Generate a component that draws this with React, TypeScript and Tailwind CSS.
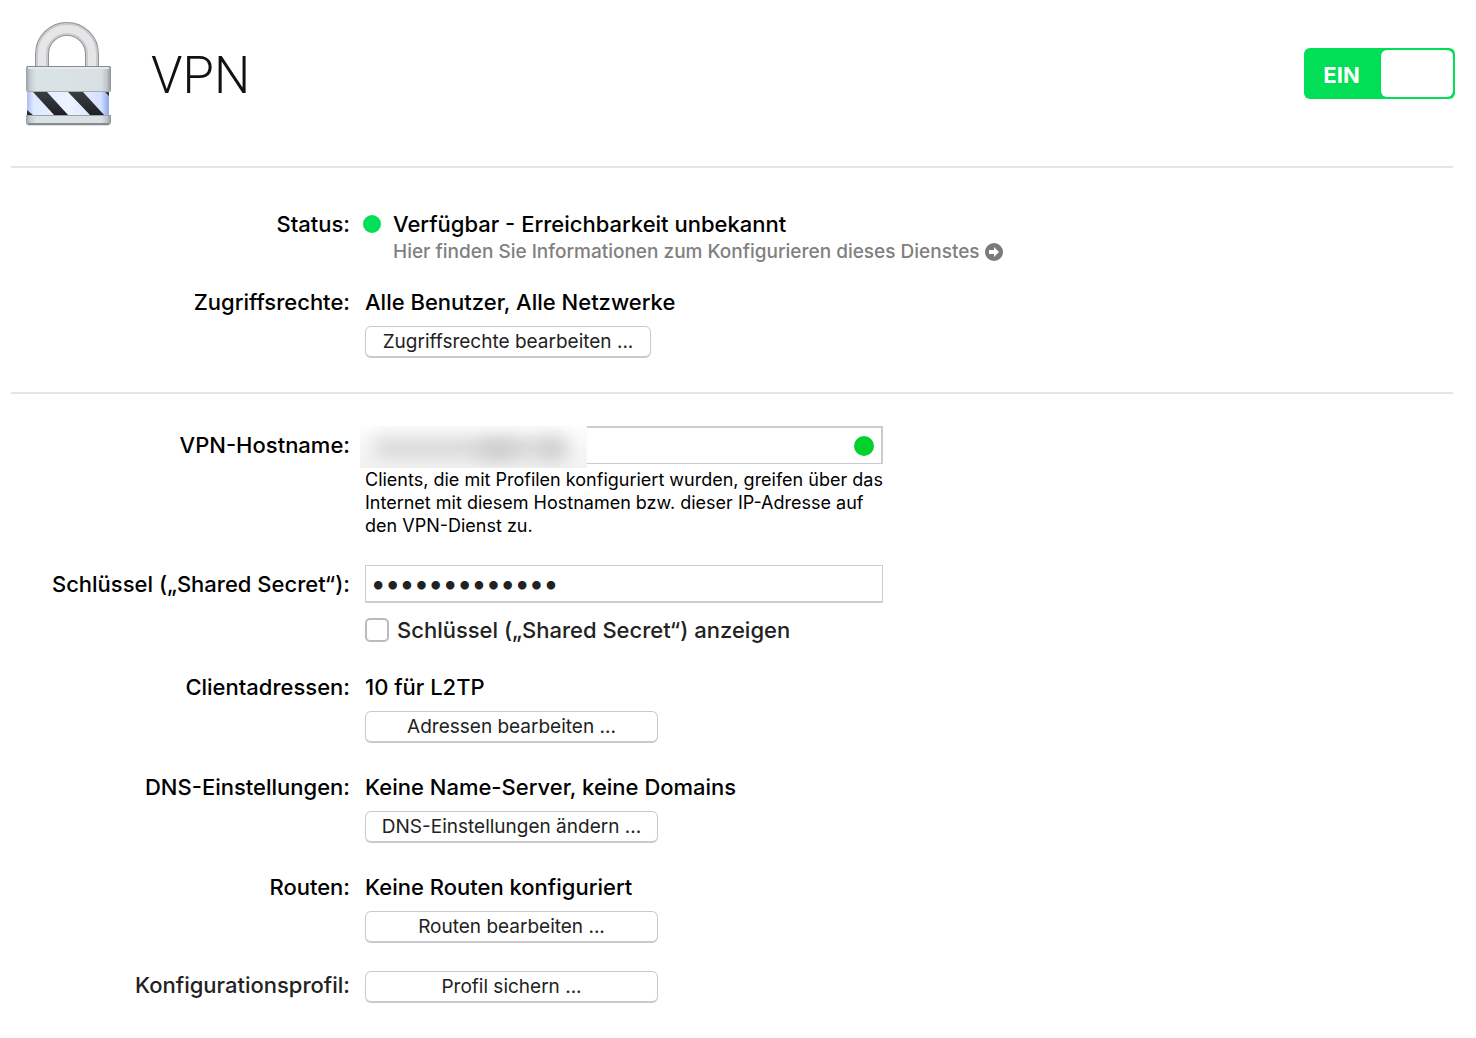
import { useState, type ReactNode } from "react";

function LockIcon() {
  return (
    <svg width="92" height="108" viewBox="0 0 92 108" aria-hidden="true">
      <defs>
        <linearGradient id="metal" x1="0" x2="1" y1="0" y2="0">
          <stop offset="0" stopColor="#989fa1" />
          <stop offset="0.05" stopColor="#c6ced1" />
          <stop offset="0.12" stopColor="#dae3e6" />
          <stop offset="0.88" stopColor="#d8e0e3" />
          <stop offset="0.95" stopColor="#c0c8cb" />
          <stop offset="1" stopColor="#8d9496" />
        </linearGradient>
        <linearGradient id="band" x1="0" x2="1" y1="0" y2="0">
          <stop offset="0" stopColor="#a9bdf2" />
          <stop offset="0.08" stopColor="#dfe9ff" />
          <stop offset="0.5" stopColor="#edf3ff" />
          <stop offset="0.9" stopColor="#d5e2ff" />
          <stop offset="1" stopColor="#8ea6ea" />
        </linearGradient>
        <linearGradient id="stripe" x1="0" x2="0" y1="0" y2="1">
          <stop offset="0" stopColor="#3a3d42" />
          <stop offset="1" stopColor="#1d1f24" />
        </linearGradient>
        <clipPath id="bandClip">
          <rect x="6" y="72" width="82" height="23" />
        </clipPath>
      </defs>
      <path d="M21 50V34a25 25 0 0 1 50 0v16" fill="none" stroke="#939396" strokeWidth="14" />
      <path d="M21 50V34a25 25 0 0 1 50 0v16" fill="none" stroke="#cbcbcd" strokeWidth="12" />
      <path d="M21 50V34a25 25 0 0 1 50 0v16" fill="none" stroke="#e6e6e8" strokeWidth="8" />
      <rect x="5" y="100" width="84" height="6" rx="3" fill="#c9cccd" opacity="0.6" />
      <rect x="6" y="70" width="82" height="26" fill="url(#band)" />
      <g clipPath="url(#bandClip)" fill="url(#stripe)">
        <path d="M12 72h14l22 24H34z" />
        <path d="M47 72h15l22 24H70z" />
        <path d="M6 90l7 6H6z" />
        <path d="M84 72h4v4z" />
      </g>
      <rect x="5" y="46" width="85" height="26" rx="2" fill="url(#metal)" />
      <path d="M6 46.500h83" stroke="#858c8e" />
      <path d="M7 48h81" stroke="#e3ebed" strokeWidth="2" />
      <path d="M6 71.500h83" stroke="#a4acaf" />
      <path d="M5 95h85v7a3 3 0 0 1-3 3H8a3 3 0 0 1-3-3z" fill="url(#metal)" />
      <path d="M6 95.500h83" stroke="#9aa2a5" />
      <path d="M7 104h81" stroke="#858c8e" strokeWidth="2" />
    </svg>
  );
}

function ArrowBadge() {
  return (
    <svg width="18" height="18" viewBox="0 0 18 18" aria-hidden="true">
      <circle cx="9" cy="9" r="9" fill="#7b7b7b" />
      <path d="M4 7h5V4l5 5-5 5v-3H4z" fill="#fff" />
    </svg>
  );
}

function Row({ label, htmlFor, children }: { label: string; htmlFor?: string; children: ReactNode }) {
  return (
    <div className="grid grid-cols-[350px_1fr] gap-x-[15px]">
      {htmlFor ? (
        <label htmlFor={htmlFor} className="pt-[5px] text-right">{label}</label>
      ) : (
        <div className="text-right">{label}</div>
      )}
      <div>{children}</div>
    </div>
  );
}

function PushButton({ children, wide = true }: { children: ReactNode; wide?: boolean }) {
  return (
    <button
      type="button"
      className={`flex h-8 items-center justify-center rounded-md border border-b-2 border-[#cbc8cb] bg-white text-[19px] font-normal text-[#222] ${wide ? "w-[293px]" : "w-[286px]"}`}
    >
      {children}
    </button>
  );
}

const sections = [
  { label: "Clientadressen:", value: "10 für L2TP", action: "Adressen bearbeiten ..." },
  { label: "DNS-Einstellungen:", value: "Keine Name-Server, keine Domains", action: "DNS-Einstellungen ändern ..." },
  { label: "Routen:", value: "Keine Routen konfiguriert", action: "Routen bearbeiten ..." },
];

export default function App() {
  const [enabled, setEnabled] = useState(true);
  const [showSecret, setShowSecret] = useState(false);

  return (
    <main className="min-h-screen bg-white pb-9 font-[Inter,'Liberation_Sans',sans-serif] text-[22px] leading-7 font-medium text-black">
      <header className="mr-[23px] ml-[11px] flex h-[168px] items-start border-b-2 border-[#e5e5e5] pt-5 pl-[10px]">
        <LockIcon />
        <h1 className="ml-[38px] pt-[26px] font-[Roboto,sans-serif] text-[51px] leading-[60px] font-light text-[#111]">VPN</h1>
        <button
          type="button"
          role="switch"
          aria-checked={enabled}
          onClick={() => setEnabled(!enabled)}
          className="mt-7 -mr-0.5 ml-auto flex h-[51px] w-[151px] rounded-md bg-[#00df55] p-0.5 text-white"
        >
          <span className="flex h-full w-[75px] items-center justify-center pt-0.5 pr-1 text-[22px] font-bold">EIN</span>
          <span className="h-full flex-1 rounded-md bg-white" />
        </button>
      </header>

      <section className="pt-[42px]">
        <Row label="Status:">
          <div className="flex items-start gap-3">
            <span className="mt-[5px] -ml-0.5 size-[18px] rounded-full bg-[#00df55]" />
            <div>
              <div>Verfügbar - Erreichbarkeit unbekannt</div>
              <a href="#hilfe" className="flex items-center gap-[5px] text-[19px] text-[#808080]">
                Hier finden Sie Informationen zum Konfigurieren dieses Dienstes
                <ArrowBadge />
              </a>
            </div>
          </div>
        </Row>
        <div className="mt-[22px]">
          <Row label="Zugriffsrechte:">
            <div className="mb-[10px]">Alle Benutzer, Alle Netzwerke</div>
            <PushButton wide={false}>Zugriffsrechte bearbeiten ...</PushButton>
          </Row>
        </div>
      </section>

      <hr className="mt-[34px] mr-[23px] mb-8 ml-[11px] border-t-2 border-[#e5e5e5]" />

      <Row label="VPN-Hostname:" htmlFor="hostname">
        <div className="relative w-[518px]">
          <input id="hostname" type="text" className="block h-[38px] w-full border-2 border-b border-[#ccc] bg-white px-2 pr-9 outline-none" />
          <span className="absolute top-[10px] right-[9px] size-5 rounded-full bg-[#00d12e]" />
          {/* redacted host name */}
          <div className="absolute top-0 -left-[5px] h-[42px] w-[227px] overflow-hidden bg-linear-to-b from-[#fdfdfd] to-[#f3f3f3]">
            <div className="absolute top-3 left-3 h-5 w-[196px] rounded-full bg-[#d8d6d8] blur-[9px]" />
            <div className="absolute top-4 left-[118px] h-4 w-10 rounded-full bg-[#cbc9cb] blur-[9px]" />
            <div className="absolute top-4 left-[180px] h-4 w-6 rounded-full bg-[#cbc9cb] blur-[9px]" />
          </div>
        </div>
        <p className="mt-1 w-[530px] text-[18px] leading-[23px] font-normal">
          Clients, die mit Profilen konfiguriert wurden, greifen über das
          <br />
          Internet mit diesem Hostnamen bzw. dieser IP-Adresse auf
          <br />
          den VPN-Dienst zu.
        </p>
      </Row>

      <div className="mt-7">
        <Row label="Schlüssel („Shared Secret“):" htmlFor="secret">
          <input
            id="secret"
            type={showSecret ? "text" : "password"}
            defaultValue="sharedsecret1"
            className="block h-[38px] w-[518px] border border-b-2 border-[#ccc] bg-white px-[5px] text-[27px] text-[#222] outline-none"
          />
          <label className="mt-[13px] flex items-center gap-2 text-[#222]">
            <input
              type="checkbox"
              checked={showSecret}
              onChange={(e) => setShowSecret(e.target.checked)}
              className="size-6 appearance-none rounded-[5px] border-2 border-[#bbb] bg-white checked:bg-[#00df55]"
            />
            Schlüssel („Shared Secret“) anzeigen
          </label>
        </Row>
      </div>

      <div className="mt-[29px] flex flex-col gap-[30px]">
        {sections.map((section) => (
          <Row key={section.label} label={section.label}>
            <div className="mb-[10px]">{section.value}</div>
            <PushButton>{section.action}</PushButton>
          </Row>
        ))}
      </div>
      <div className="mt-7 text-[#222]">
        <Row label="Konfigurationsprofil:">
          <PushButton>Profil sichern ...</PushButton>
        </Row>
      </div>
    </main>
  );
}
